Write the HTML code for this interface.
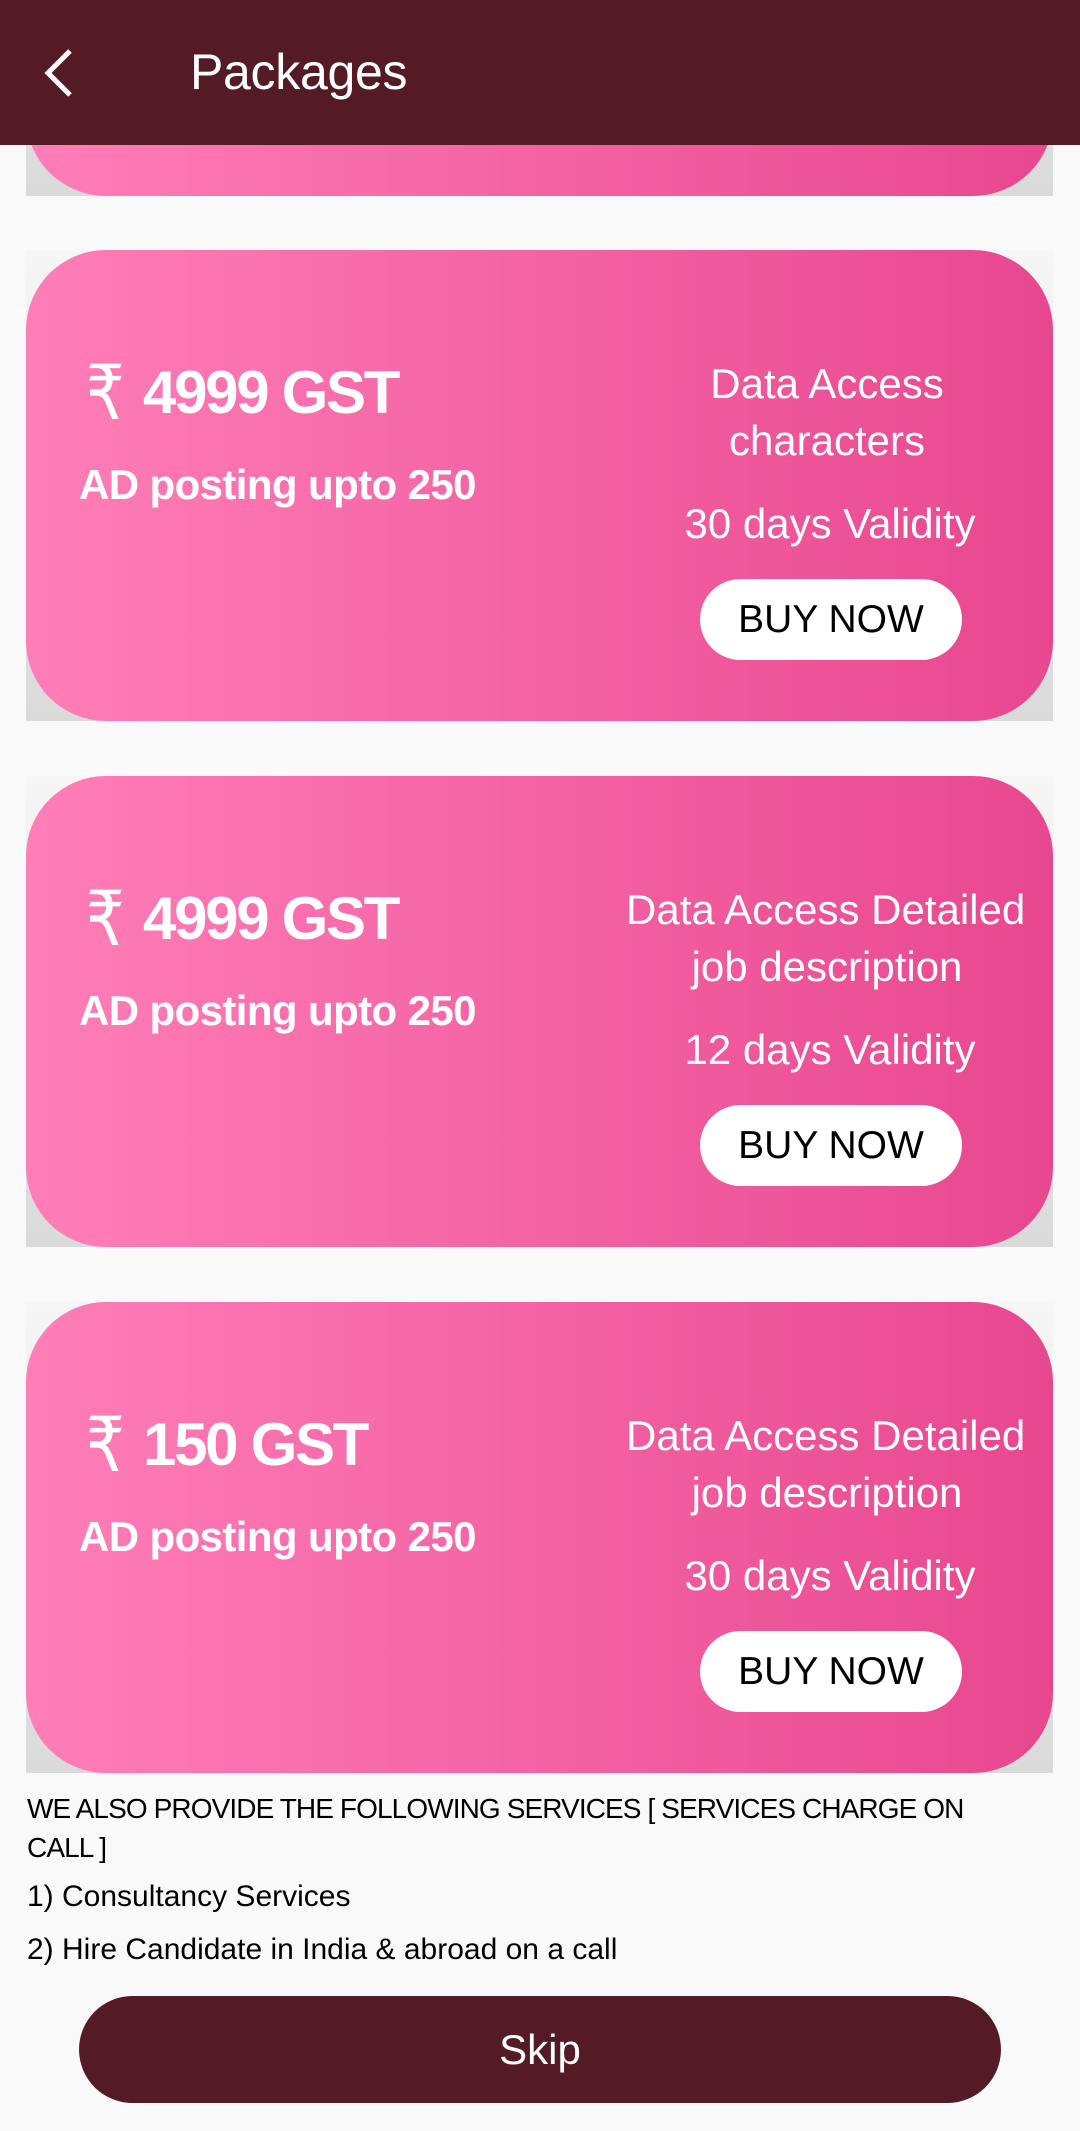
<!DOCTYPE html>
<html><head><meta charset="utf-8"><style>
*{margin:0;padding:0;box-sizing:border-box}
body{width:1080px;height:2131px;background:#f9f9f9;font-family:"Liberation Sans",sans-serif;position:relative;overflow:hidden}
.hdr{position:absolute;left:0;top:0;width:1080px;height:145px;background:#541a25;z-index:5}
.hdr .t{position:absolute;left:190px;top:43px;color:#fff;font-size:50px;letter-spacing:-0.3px}
.wrap{position:absolute;left:26px;width:1027px;height:471px;background:linear-gradient(#f6f6f6,#dadada)}
.card{position:absolute;left:0;top:0;width:100%;height:100%;border-radius:80px;background:linear-gradient(90deg,#ff7eb8,#e8478f);overflow:hidden;color:#fff}
.rs{position:absolute;left:60px;top:98px;font-size:76px;font-weight:normal;font-family:"DejaVu Sans",sans-serif;transform:scaleX(0.8);transform-origin:left}
.price{position:absolute;left:117px;top:108px;font-size:60px;font-weight:bold;letter-spacing:-2.3px}
.ad{position:absolute;left:53px;top:211px;font-size:42px;font-weight:bold;letter-spacing:-0.6px}
.rc{position:absolute;left:600px;width:402px;top:105px;text-align:center;font-size:42px;line-height:57px;overflow:hidden}
.rc .nw{white-space:nowrap;text-align:left;padding-left:0}
.val{position:absolute;left:600px;width:408px;top:250px;text-align:center;font-size:42px}
.buy{position:absolute;left:674px;top:329px;width:262px;height:81px;border-radius:41px;background:#fff;color:#000;font-size:39px;text-align:center;line-height:81px}
.txt{position:absolute;left:27px;color:#000;font-size:30px}
.skip{position:absolute;left:79px;top:1996px;width:922px;height:107px;border-radius:54px;background:#541a25;color:#fff;font-size:42px;text-align:center;line-height:107px}
</style></head><body>
<div class="hdr">
<svg style="position:absolute;left:40px;top:48px" width="36" height="50" viewBox="0 0 36 50"><path d="M30 3 L8 25 L30 47" fill="none" stroke="#fff" stroke-width="5"/></svg>
<div class="t">Packages</div></div>

<div class="wrap" style="top:-275px"><div class="card"></div></div>

<div class="wrap" style="top:250px"><div class="card">
<div class="rs">₹</div><div class="price">4999 GST</div>
<div class="ad">AD posting upto 250</div>
<div class="rc"><div>Data Access</div><div>characters</div></div>
<div class="val">30 days Validity</div>
<div class="buy">BUY NOW</div></div></div>

<div class="wrap" style="top:776px"><div class="card">
<div class="rs">₹</div><div class="price">4999 GST</div>
<div class="ad">AD posting upto 250</div>
<div class="rc"><div class="nw">Data Access Detailed</div><div>job description</div></div>
<div class="val">12 days Validity</div>
<div class="buy">BUY NOW</div></div></div>

<div class="wrap" style="top:1302px"><div class="card">
<div class="rs">₹</div><div class="price">150 GST</div>
<div class="ad">AD posting upto 250</div>
<div class="rc"><div class="nw">Data Access Detailed</div><div>job description</div></div>
<div class="val">30 days Validity</div>
<div class="buy">BUY NOW</div></div></div>

<div class="txt" style="top:1789px;line-height:39px;width:1000px;font-size:28px;letter-spacing:-0.9px">WE ALSO PROVIDE THE FOLLOWING SERVICES [ SERVICES CHARGE ON CALL ]</div>
<div class="txt" style="top:1880px">1) Consultancy Services</div>
<div class="txt" style="top:1933px">2) Hire Candidate in India &amp; abroad on a call</div>
<div class="skip">Skip</div>
</body></html>
